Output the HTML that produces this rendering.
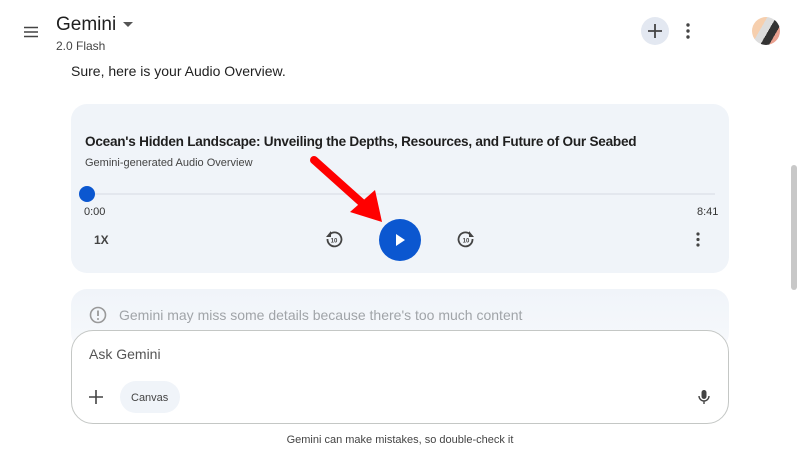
<!DOCTYPE html><html><head><style>
body{margin:0;width:800px;height:459px;background:#fff;font-family:"Liberation Sans",sans-serif;position:relative;overflow:hidden;color:#1f1f1f}
.a{position:absolute}
</style></head><body>
<svg class="a" style="left:24px;top:26px" width="14" height="12"><path d="M0 1.5H14M0 6H14M0 10.5H14" stroke="#444" stroke-width="1.6"/></svg>
<div class="a" style="left:56px;top:14px;font-size:19px;color:#1f1f1f">Gemini</div>
<svg class="a" style="left:123px;top:22px" width="10" height="6"><path d="M0 0L10 0L5 5Z" fill="#555"/></svg>
<div class="a" style="left:56px;top:39px;font-size:12px;color:#444">2.0 Flash</div>
<div class="a" style="left:641px;top:17px;width:28px;height:28px;border-radius:50%;background:#e3e8f1"></div>
<svg class="a" style="left:647px;top:23px" width="16" height="16"><path d="M8 1V15M1 8H15" stroke="#444" stroke-width="1.8"/></svg>
<svg class="a" style="left:686px;top:23px" width="4" height="16"><circle cx="2" cy="2" r="1.7" fill="#444"/><circle cx="2" cy="8" r="1.7" fill="#444"/><circle cx="2" cy="14" r="1.7" fill="#444"/></svg>
<div class="a" style="left:752px;top:17px;width:28px;height:28px;border-radius:50%;background:linear-gradient(120deg,#f6cfae 0 35%,#ddd 35% 55%,#333 55% 75%,#e9a08f 75%);"></div>
<div class="a" style="left:71px;top:63px;font-size:14px">Sure, here is your Audio Overview.</div>
<div class="a" style="left:71px;top:104px;width:658px;height:169px;background:#f0f4f9;border-radius:16px"></div>
<div class="a" style="left:85px;top:133px;font-size:14px;font-weight:bold;color:#1f1f1f;letter-spacing:-0.25px;transform:scaleX(0.97);transform-origin:left">Ocean's Hidden Landscape: Unveiling the Depths, Resources, and Future of Our Seabed</div>
<div class="a" style="left:85px;top:157px;font-size:11px;color:#444">Gemini-generated Audio Overview</div>
<div class="a" style="left:85px;top:193px;width:630px;height:2px;background:#e3e7ee"></div>
<div class="a" style="left:79px;top:186px;width:16px;height:16px;border-radius:50%;background:#0b57d0"></div>
<div class="a" style="left:84px;top:206px;font-size:11px;color:#333">0:00</div>
<div class="a" style="left:697px;top:206px;font-size:11px;color:#333">8:41</div>
<div class="a" style="left:94px;top:233px;font-size:12px;font-weight:bold;color:#444">1X</div>
<svg class="a" style="left:325px;top:230px" width="18" height="18"><path d="M5 4A7 7 0 1 1 2.5 9" fill="none" stroke="#444" stroke-width="1.8"/><path d="M6 1V7H1" fill="#444"/><text x="9" y="12.5" font-size="6" font-weight="bold" text-anchor="middle" fill="#444" font-family="Liberation Sans">10</text></svg>
<svg class="a" style="left:457px;top:230px" width="18" height="18"><path d="M13 4A7 7 0 1 0 15.5 9" fill="none" stroke="#444" stroke-width="1.8"/><path d="M12 1V7H17" fill="#444"/><text x="9" y="12.5" font-size="6" font-weight="bold" text-anchor="middle" fill="#444" font-family="Liberation Sans">10</text></svg>
<div class="a" style="left:379px;top:219px;width:42px;height:42px;border-radius:50%;background:#0b57d0"></div>
<svg class="a" style="left:396px;top:234px" width="10" height="12"><path d="M0 0L9 6L0 12Z" fill="#fff"/></svg>
<svg class="a" style="left:696px;top:232px" width="4" height="15"><circle cx="2" cy="2" r="1.6" fill="#444"/><circle cx="2" cy="7.5" r="1.6" fill="#444"/><circle cx="2" cy="13" r="1.6" fill="#444"/></svg>
<svg class="a" style="left:300px;top:150px" width="90" height="80"><path d="M14 10L62 53" stroke="#f00" stroke-width="8" stroke-linecap="round"/><path d="M50 62L82 72L75 40Z" fill="#f00"/></svg>
<div class="a" style="left:71px;top:289px;width:658px;height:60px;background:linear-gradient(#f0f4f9,#f7f9fc);border-radius:16px"></div>
<svg class="a" style="left:89px;top:306px" width="18" height="18"><circle cx="9" cy="9" r="7.5" fill="none" stroke="#999" stroke-width="1.6"/><path d="M9 4.5V10" stroke="#999" stroke-width="1.8"/><circle cx="9" cy="13" r="1" fill="#999"/></svg>
<div class="a" style="left:119px;top:307px;font-size:14px;color:#a0a4a8">Gemini may miss some details because there's too much content</div>
<div class="a" style="left:71px;top:330px;width:656px;height:92px;background:#fff;border:1px solid #c4c7c5;border-radius:22px"></div>
<div class="a" style="left:89px;top:346px;font-size:14px;color:#555">Ask Gemini</div>
<svg class="a" style="left:88px;top:389px" width="16" height="16"><path d="M8 1V15M1 8H15" stroke="#444" stroke-width="1.6"/></svg>
<div class="a" style="left:120px;top:381px;width:60px;height:32px;border-radius:16px;background:#f0f4f9"></div>
<div class="a" style="left:131px;top:392px;font-size:11px;color:#444">Canvas</div>
<svg class="a" style="left:698px;top:390px" width="12" height="15"><rect x="3.5" y="0" width="5" height="9" rx="2.5" fill="#444"/><path d="M1 6A5 5 0 0 0 11 6M6 11V14" fill="none" stroke="#444" stroke-width="1.4"/></svg>
<div class="a" style="left:0;top:434px;width:800px;text-align:center;font-size:11px;color:#444">Gemini can make mistakes, so double-check it</div>
<div class="a" style="left:791px;top:165px;width:6px;height:125px;background:#c8c8c8;border-radius:3px"></div>
</body></html>
